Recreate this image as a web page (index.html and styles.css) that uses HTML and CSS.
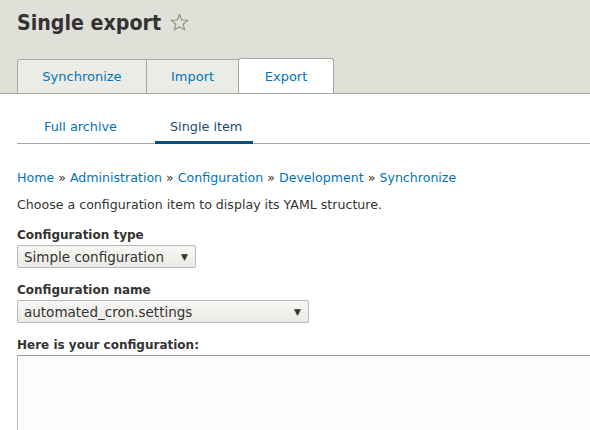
FILE: index.html
```html
<!DOCTYPE html>
<html>
<head>
<meta charset="utf-8">
<link rel="stylesheet" href="styles.css">
</head>
<body>
<header class="header">
  <h1 class="title">Single export
    <svg class="star" width="19" height="19" viewBox="0 0 20 20"><path d="M10 1.6 L12.4 7.3 L18.6 7.7 L13.9 11.7 L15.4 17.8 L10 14.5 L4.6 17.8 L6.1 11.7 L1.4 7.7 L7.6 7.3 Z" fill="none" stroke="#8a8a7e" stroke-width="1.1" stroke-linejoin="round"/></svg>
  </h1>
  <nav class="tabs">
    <a class="tab tab-sync">Synchronize</a>
    <a class="tab tab-import">Import</a>
    <a class="tab tab-export is-active">Export</a>
  </nav>
</header>
<main class="content">
  <nav class="subtabs">
    <a class="subtab sub-full">Full archive</a>
    <a class="subtab sub-single is-active">Single item</a>
  </nav>
  <div class="breadcrumb"><a>Home</a> » <a>Administration</a> » <a>Configuration</a> » <a>Development</a> » <a>Synchronize</a></div>
  <p class="desc">Choose a configuration item to display its YAML structure.</p>
  <div class="field field-first">
    <label class="label">Configuration type</label>
    <div class="select select-type"><span>Simple configuration</span><span class="arrow">▼</span></div>
  </div>
  <div class="field">
    <label class="label">Configuration name</label>
    <div class="select select-name"><span>automated_cron.settings</span><span class="arrow">▼</span></div>
  </div>
  <div class="field">
    <label class="label">Here is your configuration:</label>
    <div class="textarea"></div>
  </div>
</main>
</body>
</html>
```
FILE: styles.css
```css
* { box-sizing: border-box; }
html, body { margin: 0; padding: 0; background: #fff; }
body {
  font-family: "DejaVu Sans", "Liberation Sans", sans-serif;
  font-size: 12.6px;
  color: #333;
  width: 590px;
  height: 430px;
  overflow: hidden;
}
a { color: #0074bd; text-decoration: none; }
.header {
  background: #e0e0d8;
  border-bottom: 1px solid #a6a6a6;
  padding: 0 0 0 17px;
  height: 94px;
  display: flex;
  flex-direction: column;
}
.title {
  margin: 0;
  height: 59px;
  padding-top: 9px;
  font-family: "DejaVu Sans Condensed", "DejaVu Sans", sans-serif;
  font-size: 21.2px;
  font-weight: bold;
  color: #333;
  display: flex;
  align-items: flex-start;
  gap: 9px;
  line-height: 28px;
}
.star { margin-top: 4px; }
.tabs { display: flex; height: 34px; }
.tab {
  display: flex;
  align-items: center;
  justify-content: center;
  height: 34px;
  background: #ecece7;
  border: 1px solid #a6a6a6;
  border-bottom: none;
  font-size: 13px;
}
.tab-sync { width: 130px; border-top-left-radius: 3px; }
.tab-import { width: 92px; border-left: none; }
.tab-export { width: 96px; background: #fff; border-top-right-radius: 3px; border-top-left-radius: 3px; border-left: 1px solid #a6a6a6; margin-left: -1px; height: 35px; margin-top: -1px; margin-bottom: -1px; }
.content { padding: 0 0 0 17px; }
.subtabs {
  display: flex;
  border-bottom: 1px solid #a6a6a6;
  height: 50px;
  padding-top: 25px;
}
.subtab { font-size: 12.8px; display: block; height: 24px; }
.sub-full { width: 138px; padding-left: 27px; }
.sub-single { width: 98px; padding-left: 15px; border-bottom: 3px solid #004f80; color: #1b4d78; height: 25px; }
.breadcrumb { margin-top: 25px; line-height: 18px; }
.desc { margin: 9px 0 0; line-height: 18px; }
.field { display: flex; flex-direction: column; }
.label { font-weight: bold; font-size: 12px; margin-top: 13px; line-height: 18px; }
.field-first .label { margin-top: 12px; }
.select {
  display: flex;
  align-items: center;
  justify-content: space-between;
  height: 23px;
  border: 1px solid #b8b8b8;
  border-radius: 2px;
  background: linear-gradient(#f7f7f5, #eceae6);
  padding: 0 7px 0 6px;
  font-size: 13.5px;
  margin-top: 1px;
}
.arrow { font-size: 9px; color: #333; }
.select-type { width: 179px; }
.select-name { width: 292px; }
.textarea {
  margin-top: 1px;
  height: 90px;
  border: 1px solid #b8b8b8;
  border-top-color: #999;
  border-right: none;
  background: #fcfcfa;
}
```
